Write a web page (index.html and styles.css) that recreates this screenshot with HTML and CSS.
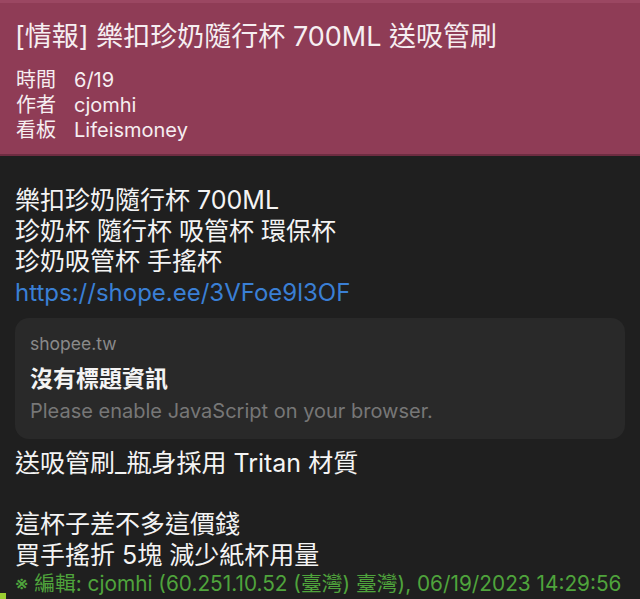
FILE: index.html
```html
<!DOCTYPE html>
<html lang="zh-Hant">
<head>
    <meta charset="UTF-8">
    <meta name="viewport" content="width=device-width, initial-scale=1.0">
    <title>[情報] 樂扣珍奶隨行杯 700ML 送吸管刷</title>
    <link rel="stylesheet" href="styles.css">
</head>
<body>
    <header class="post-header">
        <h1 class="post-title">[情報] 樂扣珍奶隨行杯 700ML 送吸管刷</h1>
        <dl class="meta">
            <div class="meta-row"><dt>時間</dt><dd>6/19</dd></div>
            <div class="meta-row"><dt>作者</dt><dd>cjomhi</dd></div>
            <div class="meta-row"><dt>看板</dt><dd>Lifeismoney</dd></div>
        </dl>
    </header>
    <main class="post-body">
        <p class="text">樂扣珍奶隨行杯 700ML<br>珍奶杯 隨行杯 吸管杯 環保杯<br>珍奶吸管杯 手搖杯<br><a class="link" href="#">https://shope.ee/3VFoe9l3OF</a></p>
        <div class="preview">
            <div class="preview-site">shopee.tw</div>
            <div class="preview-title">沒有標題資訊</div>
            <div class="preview-desc">Please enable JavaScript on your browser.</div>
        </div>
        <p class="text">送吸管刷_瓶身採用 Tritan 材質<br><br>這杯子差不多這價錢<br>買手搖折 5塊 減少紙杯用量</p>
        <p class="edit">※ 編輯: cjomhi (60.251.10.52 (臺灣) 臺灣), 06/19/2023 14:29:56</p>
    </main>
    <div class="marker"></div>
</body>
</html>
```

FILE: styles.css
```css
body {
    margin: 0;
    padding: 0;
    background-color: #1f1f1f;
    color: #f4f4f4;
    font-family: Inter, "Noto Sans CJK TC", sans-serif;
    height: 599px;
    overflow: hidden;
    position: relative;
}
.post-header {
    background-color: #8f3c56;
    border-top: 3px solid #9b4762;
    border-bottom: 2px solid #6e2c41;
    padding: 17px 15px 11px;
    color: #f6eef1;
}
.post-title {
    margin: 0;
    font-size: 27px;
    font-weight: 400;
    line-height: 34px;
    white-space: nowrap;
}
.meta {
    margin: 14px 0 0;
    font-size: 20px;
    line-height: 25px;
}
.meta-row {
    display: flex;
}
.meta dt {
    width: 58px;
    margin-left: 1px;
}
.meta dd {
    margin: 0;
}
.post-body {
    padding: 29px 15px 0;
}
.text {
    margin: 0;
    font-size: 25px;
    line-height: 30.5px;
    white-space: nowrap;
}
.link {
    color: #3a7fd5;
    font-size: 24px;
    text-decoration: none;
}
.preview {
    margin: 10px 0 9px;
    background-color: #292929;
    border-radius: 14px;
    padding: 15px 15px 16px;
}
.preview-site {
    font-size: 17.5px;
    line-height: 22px;
    color: #8a8a8a;
}
.preview-title {
    margin-top: 9px;
    font-size: 23px;
    font-weight: 700;
    line-height: 30px;
    color: #f4f4f4;
}
.preview-desc {
    margin-top: 5px;
    font-size: 20px;
    line-height: 24px;
    color: #777;
}
.edit {
    margin: 2px 0 0;
    font-size: 20.8px;
    line-height: 24px;
    color: #4fa43c;
    white-space: nowrap;
}
.marker {
    position: absolute;
    left: 0;
    bottom: 0;
    width: 6px;
    height: 6px;
    background-color: #9acd32;
}
```
